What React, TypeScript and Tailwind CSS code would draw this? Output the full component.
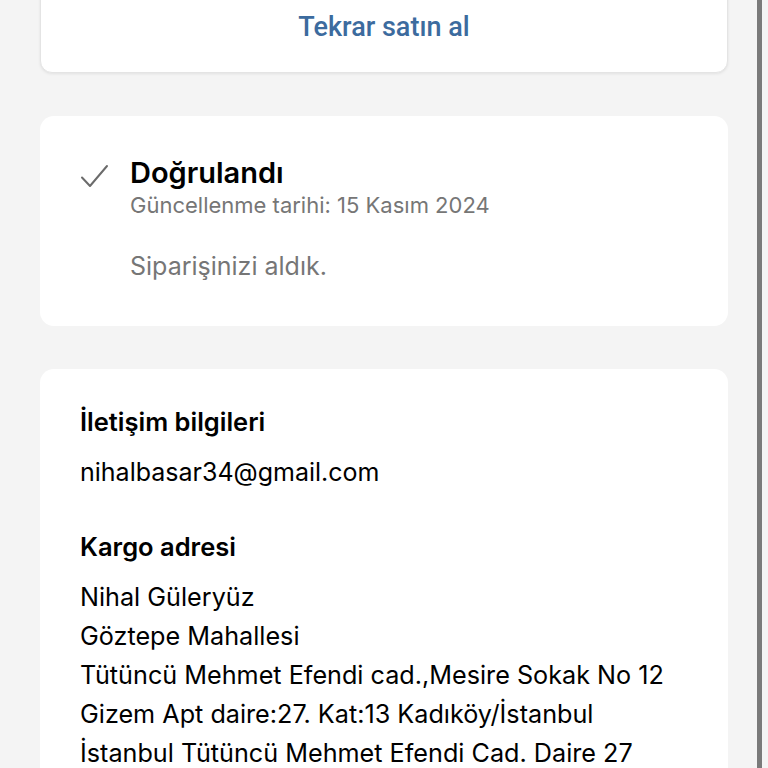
import React from "react";

const addressLines = [
  "Nihal Güleryüz",
  "Göztepe Mahallesi",
  "Tütüncü Mehmet Efendi cad.,Mesire Sokak No 12",
  "Gizem Apt daire:27. Kat:13 Kadıköy/İstanbul",
  "İstanbul Tütüncü Mehmet Efendi Cad. Daire 27",
];

function CheckIcon() {
  return (
    <svg width="30" height="26" viewBox="0 0 30 26" fill="none" className="shrink-0">
      <path d="M2 13.5 L10 22 L27 2" stroke="#6b6b6b" strokeWidth="2" strokeLinecap="round" strokeLinejoin="round" />
    </svg>
  );
}

export default function App() {
  return (
    <div className="relative h-[768px] w-[768px] overflow-hidden bg-[#f4f4f4] font-['Inter',sans-serif]">
      <div className="flex flex-col gap-[43px] pl-[40px] pr-[40px]">
        <div className="-mt-[40px] flex h-[113px] items-end justify-center rounded-b-[12px] border border-[#e4e4e4] bg-white pb-[31px] shadow-[0_1px_3px_rgba(0,0,0,0.08)]">
          <span className="font-['Roboto',sans-serif] text-[27px] font-medium leading-none text-[#3c6b9e]">
            Tekrar satın al
          </span>
        </div>

        <div className="flex h-[210px] gap-[20px] rounded-[14px] bg-white pl-[40px] pt-[40px]">
          <div className="pt-[8px]">
            <CheckIcon />
          </div>
          <div className="flex flex-col">
            <div className="text-[29px] font-semibold leading-[34px] text-black">Doğrulandı</div>
            <div className="mt-[2px] text-[22px] leading-[26px] text-[#767676]">
              Güncellenme tarihi: 15 Kasım 2024
            </div>
            <div className="mt-[33px] text-[25px] leading-[30px] text-[#767676]">Siparişinizi aldık.</div>
          </div>
        </div>

        <div className="flex flex-col rounded-t-[14px] bg-white pl-[40px] pt-[37px]">
          <div className="text-[25.5px] font-semibold leading-[32px] text-black">İletişim bilgileri</div>
          <div className="mt-[18px] text-[25px] leading-[32px] text-black">nihalbasar34@gmail.com</div>
          <div className="mt-[43px] text-[25.5px] font-semibold leading-[32px] text-black">Kargo adresi</div>
          <div className="mt-[15px] flex flex-col">
            {addressLines.map((line) => (
              <div key={line} className="whitespace-nowrap text-[25.2px] leading-[39px] text-black">
                {line}
              </div>
            ))}
          </div>
        </div>
      </div>
      <div className="absolute right-[6px] top-0 h-full w-[5px] bg-[#7a7a7a]" />
    </div>
  );
}
